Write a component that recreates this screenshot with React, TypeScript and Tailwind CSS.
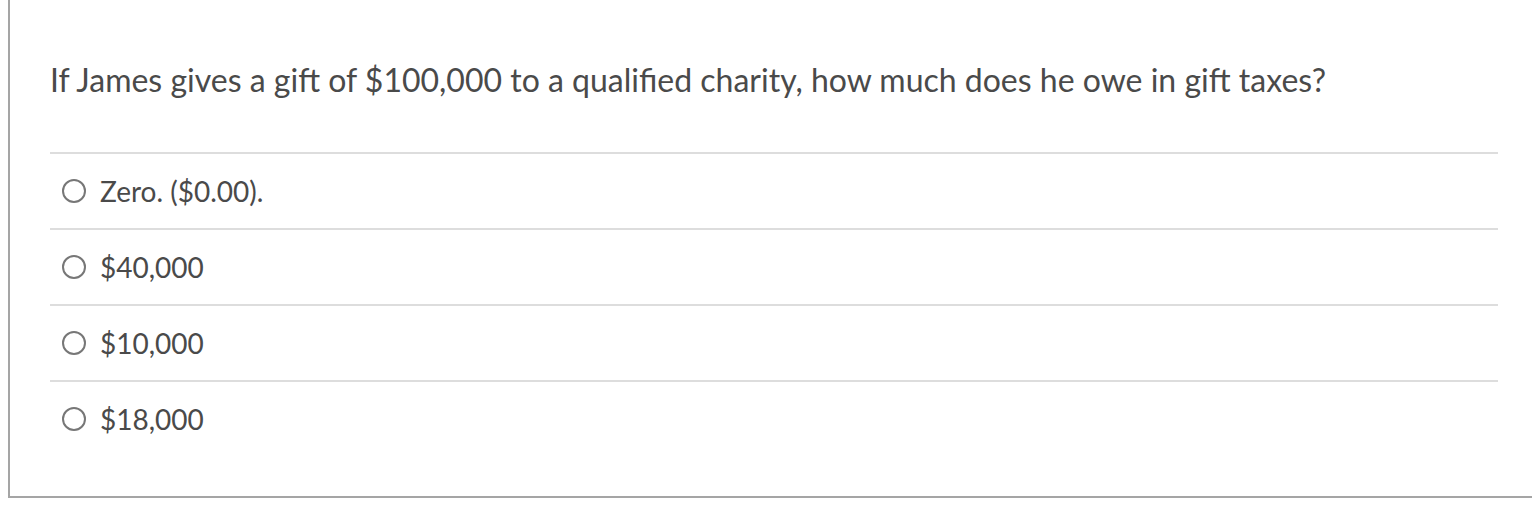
const answers = ['Zero. ($0.00).', '$40,000', '$10,000', '$18,000'];

export default function App() {
  return (
    <div className="h-[532px] w-[1532px] overflow-hidden bg-white pl-2" style={{ fontFamily: 'Lato, "Open Sans", sans-serif' }}>
      <div className="h-[498px] border-b-2 border-l-2 border-[#a5a5a5] pl-10 pr-[34px] text-[#4a4a4a]">
        <div className="pt-[60px] pb-[52px] text-[32px] leading-[40px]">
          If James gives a gift of $100,000 to a qualified charity, how much does he owe in gift taxes?
        </div>
        {answers.map((a) => (
          <div key={a} className="flex h-[76px] items-center border-t-2 border-[#dddddd] pl-3">
            <span className="h-[24px] w-[24px] shrink-0 rounded-full border-2 border-[#777]" />
            <span className="ml-[14px] text-[28px]">{a}</span>
          </div>
        ))}
      </div>
    </div>
  );
}
